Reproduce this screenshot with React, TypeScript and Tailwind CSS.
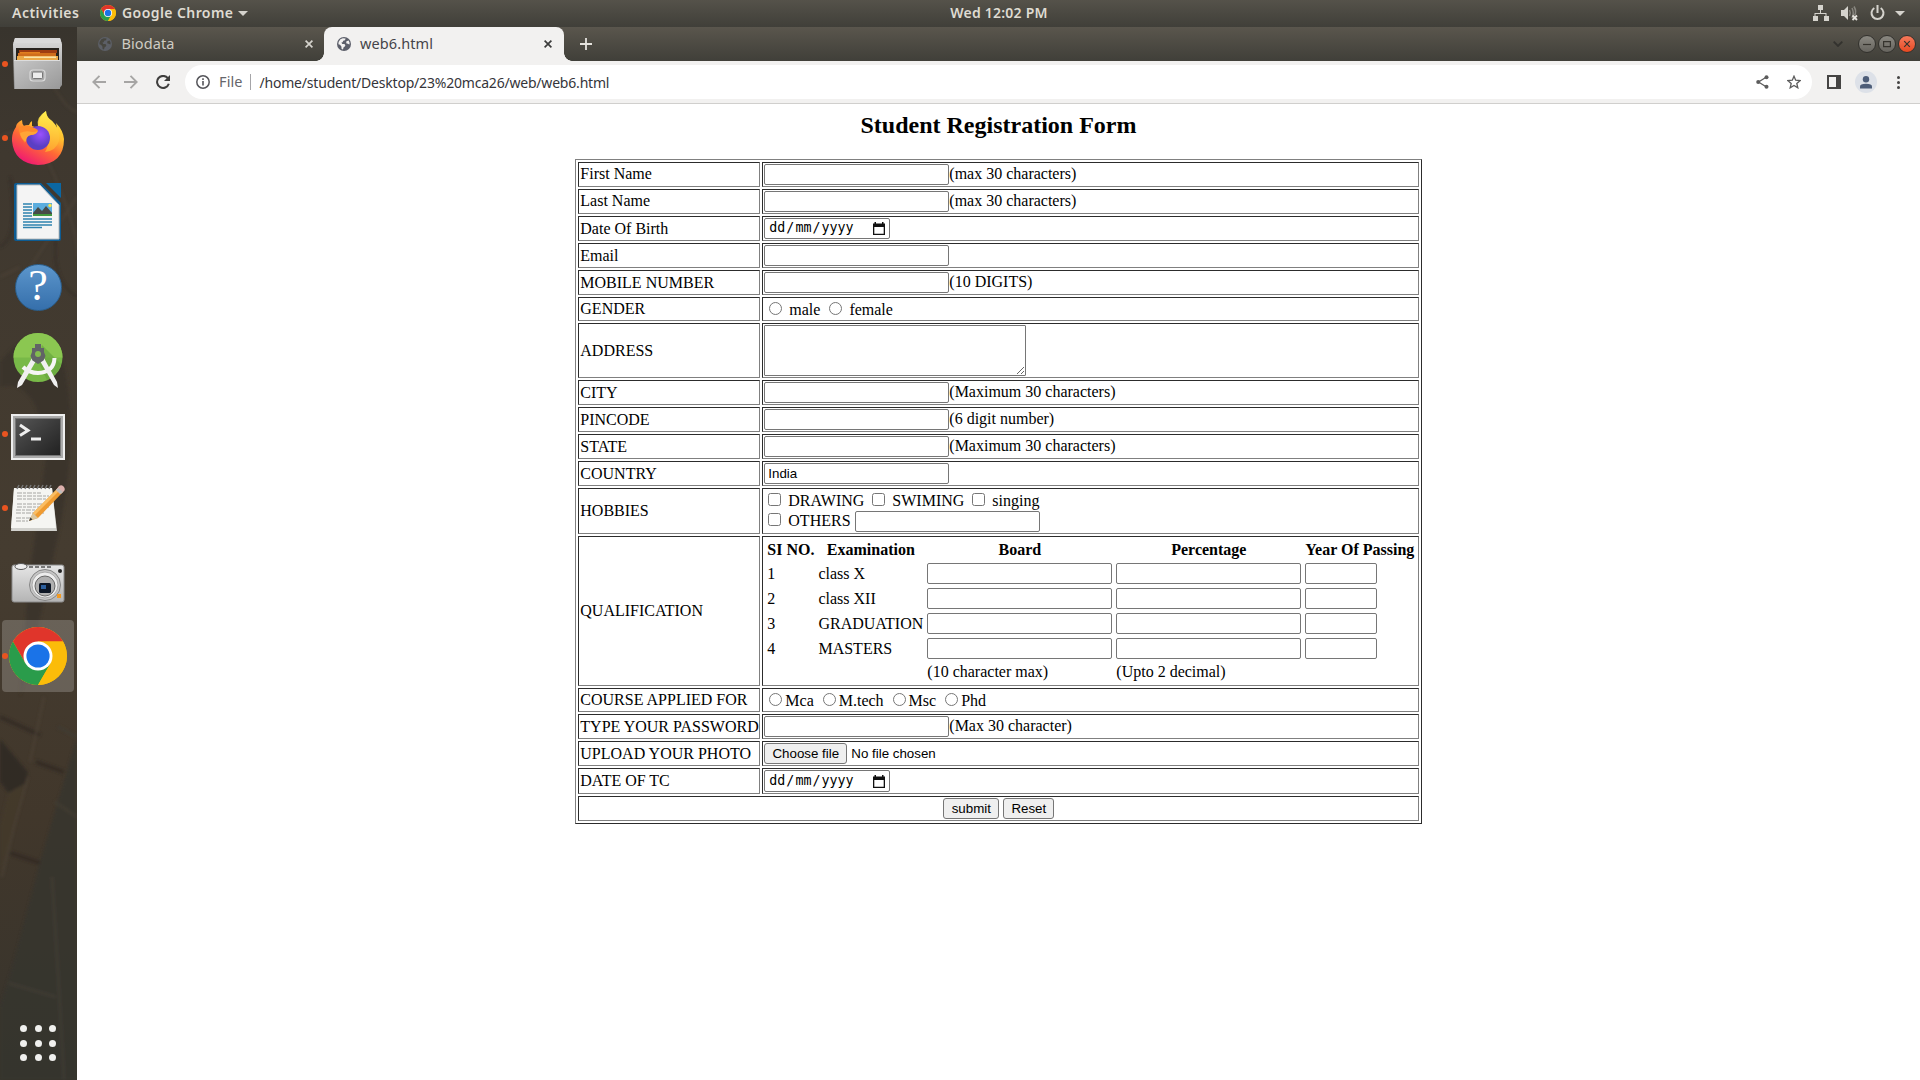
import type { ReactNode } from "react";

const ui = "font-['Noto_Sans',sans-serif]";

function ChromeLogo({ size }: { size: number }) {
  return (
    <svg width={size} height={size} viewBox="0 0 58 58">
      <circle cx="29" cy="29" r="29" fill="#fbbc09" />
      <path d="M29 14.5 H54.1 A29 29 0 0 0 3.9 14.5 L16.4 36.2 Z" fill="#e0352b" />
      <path d="M3.9 14.5 A29 29 0 0 0 29 58 L41.6 36.3 L29 29 L16.4 36.2 Z" fill="#2a9c4b" />
      <path d="M29 58 A29 29 0 0 0 54.1 14.5 H29 L41.6 36.3 Z" fill="#fbbc09" />
      <circle cx="29" cy="29" r="14.5" fill="#fff" />
      <circle cx="29" cy="29" r="11.6" fill="#1a73e8" />
    </svg>
  );
}

function Globe({ fill, cut }: { fill: string; cut: string }) {
  return (
    <svg width="14" height="14" viewBox="0 0 14 14">
      <circle cx="7" cy="7" r="7" fill={fill} />
      <path d="M5.8 1.2 L8.6 1.6 L8 3.2 L6.2 3.8 L5.6 5.3 L4.4 5.6 L5.2 6.9 L7.4 7 L8.4 8.3 L7.6 9.8 L6.6 10.2 L6 12.4 L4.6 11.9 L4.4 9.4 L3 7.8 L1.4 7.2 L1.6 5 L3.4 2.3 Z" fill={cut} />
      <path d="M9.4 4.2 L11.6 3.6 L12.6 5.8 L12.4 7.6 L10.8 6.8 L9.2 6.2 Z" fill={cut} />
    </svg>
  );
}

const Down = () => <span className="h-0 w-0 border-x-[5px] border-t-[5px] border-x-transparent border-t-[#d5d3cd]" />;

function TopBar() {
  return (
    <div className={`${ui} grid h-[27px] grid-cols-[940px_118px_1fr] items-center bg-gradient-to-b from-[#55524a] to-[#403f39] pb-px text-[14px] font-semibold leading-[26px] text-[#dfdbd2]`}>
      <div className="flex items-center pl-3">
        <span className="w-[88px] tracking-[0.500px]">Activities</span>
        <ChromeLogo size={16} />
        <span className="ml-[6px] w-[116px] tracking-[0.420px]">Google Chrome</span>
        <Down />
      </div>
      <span className="text-center tracking-[0.220px] whitespace-nowrap">Wed 12:02 PM</span>
      <div className="flex items-center justify-end pr-[15px]">
        <svg width="16" height="16" viewBox="0 0 16 16" fill="#d5d3cd">
          <path d="M5 0h5v5H8v3h5.500v3H16v5h-5v-5h1.500V9h-10v2H5v5H0v-5h1.500V8H7V5H5z" />
        </svg>
        <svg className="ml-3" width="17" height="16" viewBox="0 0 17 16">
          <path d="M0 5h3l4-4v14l-4-4H0z" fill="#d5d3cd" />
          <path d="M8.500 5q1.500 3 0 6M11 3q2.500 5 0 10M13 1.500q3 5 .500 9" fill="none" stroke="#88867f" strokeWidth="1.500" />
          <path d="M11.500 10.500l4.500 4.500m0-4.500l-4.500 4.500" stroke="#e5e3dd" strokeWidth="1.800" />
        </svg>
        <svg className="mr-[10px] ml-3" width="15" height="16" viewBox="0 0 15 16" fill="none" stroke="#d5d3cd" strokeWidth="2">
          <path d="M4.300 3A6 6 0 1 0 10.700 3M7.500 0v8" />
        </svg>
        <Down />
      </div>
    </div>
  );
}

function FilesIcon() {
  return (
    <svg width="52" height="54" viewBox="0 0 52 54">
      <defs>
        <linearGradient id="fa" x2="0" y2="1"><stop stopColor="#dcdcdc" /><stop offset="1" stopColor="#8e8e8e" /></linearGradient>
        <linearGradient id="fb" x2="1" y2="1"><stop stopColor="#c6c6c6" /><stop offset="1" stopColor="#999" /></linearGradient>
      </defs>
      <path d="M3 1h45l2 6v41l-3 4H2L1 7z" fill="url(#fa)" />
      <path d="M3 1h45l1.500 5h-48z" fill="#d9d9d9" />
      <path d="M4 11h43v13H4z" fill="#27221d" />
      <path d="M7 13h38v3H7z" fill="#9e3d12" /><path d="M6 16h38v4H6z" fill="#cf6d1c" />
      <path d="M8 15h20v1.500H8z" fill="#e2801f" /><path d="M5 19h41v5H5z" fill="#eba947" /><path d="M12 19.500h32v1.500H12z" fill="#f8e3a8" />
      <path d="M2 23h46v29H3z" fill="url(#fb)" /><path d="M2 23h46v1H2z" fill="#ddd" />
      <rect x="18" y="33" width="15" height="11" rx="3" fill="#aaa" stroke="#dadada" strokeWidth="1.200" />
      <rect x="20.500" y="35" width="10" height="6.500" rx="1" fill="#ececec" stroke="#777" />
    </svg>
  );
}

function FirefoxIcon() {
  return (
    <svg width="52" height="54" viewBox="0 0 52 54">
      <defs>
        <linearGradient id="ff" x1=".8" x2=".25" y2="1"><stop stopColor="#fff04a" /><stop offset=".35" stopColor="#ffbd2e" /><stop offset=".6" stopColor="#ff6a35" /><stop offset="1" stopColor="#ee1178" /></linearGradient>
        <radialGradient id="fp" cx=".6" cy=".35"><stop stopColor="#9a50ff" /><stop offset="1" stopColor="#5a3fc4" /></radialGradient>
        <linearGradient id="fy" x2="0" y2="1"><stop stopColor="#fff14f" /><stop offset="1" stopColor="#ffa92f" /></linearGradient>
      </defs>
      <path d="M10 9q0 4 2 6 2-1 5-1 1-3 3-4v5l6 2q-1-10 8-17 0 6 6 10 2 2 5 7l-1-5q7 7 8 16 0 25-26 26Q2 52 0 30q-.500-8 4-14 0-4 6-7z" fill="url(#ff)" />
      <path d="M26 15q-2-9 8-15 0 6 6 10 9 8 7 20-3 10-14 11 8-13-7-26z" fill="url(#fy)" opacity=".85" />
      <circle cx="26" cy="27" r="12" fill="url(#fp)" />
      <path d="M7 16q8-3 13 0 3 1 6 3-1 4-7 5-6 0-6 8-7-8-6-16z" fill="#ff8a2b" />
      <path d="M8 22q6-3 12-1 3 0 6-1-2 4-7 4-5 1-5 7-5-3-6-9z" fill="#ffa436" />
    </svg>
  );
}

function WriterIcon() {
  return (
    <svg width="48" height="58" viewBox="0 0 48 58">
      <path d="M2 0h25l20 20v36q0 2-2 2H2q-2 0-2-2V2q0-2 2-2z" fill="#0d5c93" />
      <path d="M3 2h23l19 20v34H3z" fill="#f4f4f4" stroke="#b9bcbf" />
      <path d="M32 0h15v15z" fill="#0b67a3" />
      <path d="M9 21h9M9 24h9M9 27h9M9 30h9M9 33h9M9 36h29M9 39h29M9 42h29M9 44.500h19" stroke="#2e82ae" strokeWidth="1.600" />
      <path d="M19 20h19v13H19z" fill="#5badde" /><path d="M19 30l5-6 4 4 4-5 6 7v3H19z" fill="#474b48" /><path d="M19 31h19v2H19z" fill="#42983d" />
      <circle cx="36" cy="22.500" r="1.700" fill="#f4e34a" />
    </svg>
  );
}

function HelpIcon() {
  return (
    <div className="mt-[2px] flex h-[47px] w-[47px] items-center justify-center rounded-full border border-[#2b608f] bg-gradient-to-b from-[#5c96cc] to-[#356fab] pb-0.5 font-['Liberation_Serif',serif] text-[44px] leading-none text-white">?</div>
  );
}

function StudioIcon() {
  return (
    <svg className="mt-[2px]" width="50" height="56" viewBox="0 0 50 56">
      <circle cx="25" cy="24.500" r="24.500" fill="#78b948" /><path d="M.5 24.500a24.500 24.500 0 0 1 49 0z" fill="#8bc751" />
      <path d="M29 12l19 19q-4 12-14 16L25 28z" fill="#65a43d" opacity=".65" />
      <path d="M10 34q6 6 15 6 16-1 16.500-15" fill="none" stroke="#f6f6f6" strokeWidth="4" />
      <path d="M19 25l4 3L9 52l-5 3 1-6zM31 25l-4 3 14 24 4 3-1-6z" fill="#f0f0f0" />
      <path d="M22 11h6v4h3v4l1.500 4-2 4.500L25 31l-5.500-3.500-2-4.500L19 19v-4h3z" fill="#616466" /><circle cx="25" cy="21" r="3" fill="#83bc4e" />
    </svg>
  );
}

function TerminalIcon() {
  return (
    <div className="mt-[5px] h-[46px] w-[54px] border-2 border-[#eee] bg-[#aaa] p-0.5">
      <div className="h-full border border-[#777] bg-gradient-to-br from-[#555] to-[#222]">
        <svg width="46" height="34" viewBox="0 0 46 34" fill="none" stroke="#eee" strokeWidth="3"><path d="M4 6l8 5.500-8 5M15 20h10" /></svg>
      </div>
    </div>
  );
}

function NotesIcon() {
  return (
    <svg width="56" height="50" viewBox="0 0 56 50">
      <path d="M4 5h38l5 43H1z" fill="#d2d2ce" /><path d="M4 5h38l4 40H1z" fill="#f5f5f2" />
      <path d="M7 6l2-4m2 4l2-4m2 4l2-4m2 4l2-4m2 4l2-4m2 4l2-4m2 4l2-4m2 4l2-4m2 4l2-4" stroke="#777" strokeWidth="1.500" />
      <path d="M7 10h24M7 13h32M7 16h30M7 21h29M7 24h32M6 27h30M6 30h28M6 35h16M6 38h12" stroke="#a5a5a2" strokeDasharray="5 1 3 1" />
      <path d="M19 38l4-8L48 5l5 4-25 26z" fill="#ef9b31" /><path d="M23 30L48 5l2 2-25 25z" fill="#fabd63" /><path d="M19 38l4-8 5 5z" fill="#d9c6a0" /><path d="M19 38l1.500-3.500 2 2z" fill="#333" />
      <path d="M46 7l3-4q3-2 5 1t-1 5l-3 2z" fill="#dcb0ac" /><path d="M46 7l2-2 5 4-2 2z" fill="#bdbdbd" />
    </svg>
  );
}

function CameraIcon() {
  return (
    <svg className="mt-[2px]" width="54" height="40" viewBox="0 0 54 40">
      <defs><linearGradient id="ca" x2="0" y2="1"><stop stopColor="#e6e6e6" /><stop offset="1" stopColor="#b4b4b4" /></linearGradient></defs>
      <rect x="1" y="2" width="52" height="37" rx="2" fill="url(#ca)" stroke="#8b8b8b" />
      <ellipse cx="10" cy="3.500" rx="6" ry="3" fill="#eee" stroke="#555" /><path d="M18 4h22" stroke="#555" strokeWidth="1.500" strokeDasharray="4 2" />
      <circle cx="34" cy="22" r="15.500" fill="#c6c6c6" stroke="#858585" /><circle cx="34" cy="22" r="13" fill="#ededed" stroke="#aaa" /><circle cx="34" cy="23" r="10" fill="#b0b0b0" stroke="#666" />
      <rect x="28" y="20" width="12" height="10" rx="1.500" fill="#0d1625" /><rect x="30" y="22" width="5" height="4" fill="#2c5f9e" />
      <circle cx="49" cy="8" r="2" fill="#222" /><rect x="46" y="31" width="4" height="4" fill="#f39a22" />
    </svg>
  );
}

function Slot({ running, active, children }: { running?: boolean; active?: boolean; children: ReactNode }) {
  return (
    <div className="relative flex h-[74px] w-[76px] items-center justify-center">
      {active && <span className="absolute inset-x-[2px] inset-y-[1px] rounded-[4px] bg-white/20" />}
      {running && <span className="absolute top-[34px] left-[2px] h-[6px] w-[6px] rounded-full bg-[#e95420]" />}
      <div className="relative">{children}</div>
    </div>
  );
}

function Dock() {
  return (
    <div className="relative flex w-[77px] shrink-0 flex-col justify-between overflow-hidden bg-[#40382d]">
      <svg className="absolute inset-0" width="77" height="1053" viewBox="0 0 77 1053">
        <defs>
          <linearGradient id="wall" x2="0" y2="1"><stop stopColor="#38342d" /><stop offset=".12" stopColor="#3f382f" /><stop offset=".5" stopColor="#453c30" /><stop offset=".75" stopColor="#41372b" /><stop offset="1" stopColor="#37342d" /></linearGradient>
          <filter id="soft"><feGaussianBlur stdDeviation="1.500" /></filter>
        </defs>
        <rect width="77" height="1053" fill="url(#wall)" />
        <g filter="url(#soft)" opacity=".7">
          <path d="M0 335Q35 290 62 330Q80 400 60 500L38 600 20 670 28 560 46 430Q40 350 0 360z" fill="#383129" />
          <path d="M77 710L68 740 40 835 15 930 0 980 0 1053 77 1053z" fill="#35342e" />
          <path d="M0 712L28 745 25 760 8 766 0 755z" fill="#2c2822" />
          <path d="M8 766L26 756 12 805 0 850 0 800z" fill="#453b2c" />
          <path d="M36 735L64 745M10 826L40 836M0 690L40 708" stroke="#2e2820" strokeWidth="4" />
          <path d="M52 850L58 945 64 1053M8 956L56 970M58 700L77 710M55 775L77 790" fill="none" stroke="#3f3c34" strokeWidth="3" />
          <path d="M44 670L30 735M28 750L14 800 2 850M40 30Q60 80 77 85M0 110Q30 90 55 150T77 230M0 250L20 240M30 240L77 170" fill="none" stroke="#51463a" strokeWidth="1.500" />
          <path d="M60 190Q45 250 77 270M10 150Q20 210 0 220" fill="none" stroke="#312c26" strokeWidth="2" />
        </g>
      </svg>
      <div className="relative">
        <Slot running><FilesIcon /></Slot>
        <Slot running><FirefoxIcon /></Slot>
        <Slot><WriterIcon /></Slot>
        <Slot><HelpIcon /></Slot>
        <Slot><StudioIcon /></Slot>
        <Slot running><TerminalIcon /></Slot>
        <Slot running><NotesIcon /></Slot>
        <Slot><CameraIcon /></Slot>
        <Slot running active><ChromeLogo size={58} /></Slot>
      </div>
      <div className="relative mb-[19px] ml-[20px] grid w-[36px] grid-cols-3 gap-[7.500px]">
        {Array.from({ length: 9 }, (_, i) => <span key={i} className="h-[7px] w-[7px] rounded-full bg-[#f0f0ee]" />)}
      </div>
    </div>
  );
}

function Cross({ color }: { color: string }) {
  return <svg width="8" height="8" viewBox="0 0 8 8" stroke={color} strokeWidth="1.700"><path d="M.6.600l6.800 6.800m0-6.800L.6 7.400" /></svg>;
}

function TabStrip() {
  return (
    <div className={`${ui} flex h-[34px] items-center bg-gradient-to-b from-[#5a564d] to-[#403f39] text-[14.500px]`}>
      <div className="flex w-[247px] items-center pr-[11px] pl-[21px] text-[#cfccc4]">
        <Globe fill="#5c5f66" cut="#47463f" />
        <span className="ml-[9.500px] flex-1 tracking-[0.100px]">Biodata</span>
        <Cross color="#d5d3cd" />
      </div>
      <div className="relative flex h-[34px] w-[240px] items-center rounded-t-[8px] bg-[#f2f1f0] pr-[12px] pl-[13px] text-[#45444a]">
        <span className="absolute bottom-0 left-[-8px] h-2 w-2 bg-[radial-gradient(circle_at_0_0,transparent_7.500px,#f2f1f0_8px)]" />
        <span className="absolute right-[-8px] bottom-0 h-2 w-2 bg-[radial-gradient(circle_at_100%_0,transparent_7.500px,#f2f1f0_8px)]" />
        <Globe fill="#5c5f6a" cut="#f2f1f0" />
        <span className="ml-[9px] flex-1 tracking-[0.100px]">web6.html</span>
        <Cross color="#3c3c3c" />
      </div>
      <svg className="ml-[16px]" width="12" height="12" viewBox="0 0 12 12" stroke="#e5e3de" strokeWidth="1.800"><path d="M6 0v12M0 6h12" /></svg>
      <div className="ml-auto flex items-center gap-[2px] pr-[4px]">
        <svg className="mr-[13px]" width="10" height="6" viewBox="0 0 10 6" fill="none" stroke="#33322e" strokeWidth="1.800"><path d="M.7.700L5 5 9.300.700" /></svg>
        {["min", "max", "close"].map((k) => (
          <span key={k} className={k === "close" ? "flex h-[18px] w-[18px] items-center justify-center rounded-full border border-[#33322e] bg-gradient-to-b from-[#f5795a] to-[#e6481f]" : "flex h-[18px] w-[18px] items-center justify-center rounded-full border border-[#33322e] bg-gradient-to-b from-[#8a8881] to-[#66645e]"}>
            <svg width="8" height="8" viewBox="0 0 8 8" fill="none" stroke="#35332d" strokeWidth="1.200">
              {k === "min" && <path d="M0 4.500h8" />}
              {k === "max" && <path d="M.6 1.600h6.800v5H.6z" />}
              {k === "close" && <path d="M1.200 1.200l5.600 5.600m0-5.600L1.200 6.800" />}
            </svg>
          </span>
        ))}
      </div>
    </div>
  );
}

function Toolbar() {
  return (
    <div className={`${ui} flex h-[43px] items-center border-b border-[#d0cfcd] bg-[#f2f1f0] pl-[15px] text-[14.500px]`}>
      <svg width="14" height="14" viewBox="0 0 14 14" fill="none" stroke="#a6a5a4" strokeWidth="1.900"><path d="M14 7H1.500M7.500.800L1.300 7l6.200 6.200" /></svg>
      <svg className="ml-[18px]" width="14" height="14" viewBox="0 0 14 14" fill="none" stroke="#a6a5a4" strokeWidth="1.900"><path d="M0 7h12.500M6.500.800L12.700 7l-6.200 6.200" /></svg>
      <svg className="ml-[18px]" width="14" height="14" viewBox="0 0 14 14"><path d="M11.800 3.200A6 6 0 1 0 12.800 8.700" fill="none" stroke="#3f3e3d" strokeWidth="2" /><path d="M14 0v6H8z" fill="#3f3e3d" /></svg>
      <div className="ml-[15px] flex h-[34px] w-[1627px] items-center rounded-full bg-white pl-[11px]">
        <svg width="14" height="14" viewBox="0 0 14 14"><circle cx="7" cy="7" r="6.200" fill="none" stroke="#55555a" strokeWidth="1.500" /><path d="M6.200 6h1.600v4.500H6.200zM6.200 3.300h1.600v1.600H6.200z" fill="#55555a" /></svg>
        <span className="ml-[9px] w-[30.500px] tracking-[0.100px] text-[#66666b]">File</span>
        <span className="h-[16px] w-px bg-[#a5a5a8]" />
        <span className="ml-[9px] flex-1 text-[14px] tracking-[-0.200px] whitespace-nowrap text-[#35353a]">/home/student/Desktop/23%20mca26/web/web6.html</span>
        <svg className="mr-[18px]" width="13" height="14" viewBox="0 0 13 14" fill="#5c5c5c"><path d="M10.500 2L2.500 7l8 5" fill="none" stroke="#5c5c5c" strokeWidth="1.300" /><circle cx="10.500" cy="2.200" r="2" /><circle cx="2.200" cy="7" r="2" /><circle cx="10.500" cy="11.800" r="2" /></svg>
        <svg className="mr-[11px]" width="14" height="14" viewBox="0 0 14 14" fill="none" stroke="#5c5c5c" strokeWidth="1.300"><path d="M7 1.200l1.700 4 4.400.400-3.300 2.900 1 4.300L7 10.500l-3.800 2.300 1-4.300L.9 5.600l4.400-.400z" /></svg>
      </div>
      <svg className="ml-[15px]" width="14" height="14" viewBox="0 0 14 14"><path d="M0 0h14v14H0z" fill="#454443" /><path d="M2 2h7v10H2z" fill="#f2f1f0" /></svg>
      <span className="ml-[14px] flex h-[22px] w-[22px] items-center justify-center rounded-full bg-[#dde1e8]">
        <svg width="12" height="13" viewBox="0 0 12 13" fill="#4d5d78"><circle cx="6" cy="3.300" r="3.200" /><path d="M0 12.500v-2q0-2.700 6-2.700t6 2.700v2z" /></svg>
      </span>
      <span className="ml-[20px] flex flex-col gap-[2px]">
        {[0, 1, 2].map((i) => <span key={i} className="h-[3px] w-[3px] rounded-full bg-[#454443]" />)}
      </span>
    </div>
  );
}

function Box({ small, value }: { small?: boolean; value?: string }) {
  return (
    <input
      type="text"
      defaultValue={value}
      className={`${small ? "w-[72px]" : "w-[185px]"} block h-[21px] shrink-0 rounded-[2px] border border-[#767676] bg-white px-[3px] font-['Liberation_Sans',sans-serif] text-[13.333px] leading-[15px] text-black`}
    />
  );
}

const cell = "border border-t-[#2c2c2c] border-l-[#2c2c2c] border-r-[#808080] border-b-[#808080] p-px";

function Row({ label, h = "h-[25px]", raised, children }: { label: string; h?: string; raised?: boolean; children: ReactNode }) {
  return (
    <tr>
      <td className={`${cell} ${h} w-[182px] align-middle whitespace-nowrap`}><div className={raised ? "-mt-px mb-px" : ""}>{label}</div></td>
      <td className={`${cell} ${h} w-[657px] align-middle`}>{children}</td>
    </tr>
  );
}

const Field = ({ note, value }: { note?: string; value?: string }) => (
  <div className="flex h-[21px] items-start"><Box value={value} />{note && <span className="mt-px whitespace-nowrap">{note}</span>}</div>
);

function DateBox({ tall }: { tall?: boolean }) {
  return (
    <div className={`${tall ? "h-[22px]" : "h-[21px]"} flex w-[126px] items-center rounded-[2px] border border-[#767676] pr-[4px] pl-[4px] font-['DejaVu_Sans_Mono',monospace] text-[13.333px] leading-[16px]`}>
      <span className="-mt-px flex flex-1 gap-[1px]"><span>dd</span><span>/</span><span>mm</span><span>/</span><span>yyyy</span></span>
      <svg width="12" height="13" viewBox="0 0 12 13"><path d="M0 1.500h1.500V0H3v1.500h6V0h1.500v1.500H12V13H0zM1.300 5v6.700h9.400V5z" fill="#111" fillRule="evenodd" /></svg>
    </div>
  );
}

const Radio = () => <input type="radio" className="mt-[3px] mr-[3px] ml-[5px] h-[13px] w-[13px]" />;
const Check = () => <input type="checkbox" className="mt-[3px] mr-[3px] ml-[4px] h-[13px] w-[13px]" />;

const button = "h-[21px] rounded-[3px] border border-[#767676] bg-[#efefef] text-center font-['Liberation_Sans',sans-serif] text-[13.333px] leading-[19px] text-black";

function Qualification() {
  return (
    <table className="border-separate border-spacing-[2px]">
      <thead>
        <tr className="h-[20px]">
          <th className="w-[49px] p-px whitespace-nowrap">SI NO.</th>
          <th className="w-[107px] p-px">Examination</th>
          <th className="w-[187px] p-px">Board</th>
          <th className="w-[187px] p-px">Percentage</th>
          <th className="w-[111px] p-px whitespace-nowrap">Year Of Passing</th>
        </tr>
      </thead>
      <tbody>
        {["class X", "class XII", "GRADUATION", "MASTERS"].map((name, i) => (
          <tr key={name} className="h-[23px]">
            <td className="p-px">{i + 1}</td>
            <td className="p-px">{name}</td>
            <td className="p-px"><Box /></td>
            <td className="p-px"><Box /></td>
            <td className="p-px"><Box small /></td>
          </tr>
        ))}
        <tr className="h-[20px]">
          <td className="p-px" />
          <td className="p-px" />
          <td className="p-px">(10 character max)</td>
          <td className="p-px">(Upto 2 decimal)</td>
          <td className="p-px" />
        </tr>
      </tbody>
    </table>
  );
}

function Form() {
  return (
    <main className="flex flex-1 flex-col items-center bg-white font-['Liberation_Serif',serif] text-[16px] leading-[18px] text-black">
      <h2 className="mt-[7px] text-[24px] leading-[28px] font-bold">Student Registration Form</h2>
      <table className="mt-[20px] ml-[0.600px] w-[847px] table-fixed border-separate border-spacing-[2px] border border-t-[#808080] border-r-[#2c2c2c] border-b-[#2c2c2c] border-l-[#808080]">
        <colgroup><col className="w-[182px]" /><col className="w-[657px]" /></colgroup>
        <tbody>
          <Row label="First Name" raised><Field note="(max 30 characters)" /></Row>
          <Row label="Last Name" raised><Field note="(max 30 characters)" /></Row>
          <Row label="Date Of Birth"><DateBox /></Row>
          <Row label="Email"><Field /></Row>
          <Row label="MOBILE NUMBER"><Field note="(10 DIGITS)" /></Row>
          <Row label="GENDER" h="h-[24px]">
            <div className="flex h-[20px] items-start"><Radio /><span className="mt-[2px] whitespace-pre"> male </span><Radio /><span className="mt-[2px] whitespace-pre"> female</span></div>
          </Row>
          <Row label="ADDRESS" h="h-[55px]">
            <textarea className="block h-[51px] w-[262px] resize rounded-[1px] border border-[#767676]" />
          </Row>
          <Row label="CITY"><Field note="(Maximum 30 characters)" /></Row>
          <Row label="PINCODE"><Field note="(6 digit number)" /></Row>
          <Row label="STATE"><Field note="(Maximum 30 characters)" /></Row>
          <Row label="COUNTRY"><Field value="India" /></Row>
          <Row label="HOBBIES" h="h-[46px]">
            <div className="flex h-[21px] items-start"><Check /><span className="mt-[2px] whitespace-pre"> DRAWING </span><Check /><span className="mt-[2px] whitespace-pre"> SWIMING </span><Check /><span className="mt-[2px] whitespace-pre"> singing</span></div>
            <div className="flex h-[21px] items-start"><span className="-mt-[1px] flex"><Check /></span><span className="mt-[1px] whitespace-pre"> OTHERS </span><Box /></div>
          </Row>
          <Row label="QUALIFICATION" h="h-[150px]"><Qualification /></Row>
          <Row label="COURSE APPLIED FOR" h="h-[24px]">
            <div className="flex h-[20px] items-start">
              {["Mca ", "M.tech ", "Msc ", "Phd"].map((c) => (
                <span key={c} className="flex items-start"><Radio /><span className="mt-[2px] whitespace-pre">{c}</span></span>
              ))}
            </div>
          </Row>
          <Row label="TYPE YOUR PASSWORD"><Field note="(Max 30 character)" /></Row>
          <Row label="UPLOAD YOUR PHOTO">
            <div className="flex items-center">
              <button className={`${button} w-[83px]`}>Choose file</button>
              <span className="ml-[4px] font-['Liberation_Sans',sans-serif] text-[13.333px]">No file chosen</span>
            </div>
          </Row>
          <Row label="DATE OF TC" h="h-[26px]"><DateBox tall /></Row>
          <tr>
            <td colSpan={2} className={`${cell} h-[25px]`}>
              <div className="flex justify-center gap-[4px]">
                <button className={`${button} w-[56px]`}>submit</button>
                <button className={`${button} w-[51px]`}>Reset</button>
              </div>
            </td>
          </tr>
        </tbody>
      </table>
    </main>
  );
}

export default function App() {
  return (
    <div className="flex h-[1080px] w-[1920px] flex-col overflow-hidden bg-white">
      <TopBar />
      <div className="flex min-h-0 flex-1">
        <Dock />
        <div className="flex flex-1 flex-col">
          <TabStrip />
          <Toolbar />
          <Form />
        </div>
      </div>
    </div>
  );
}
